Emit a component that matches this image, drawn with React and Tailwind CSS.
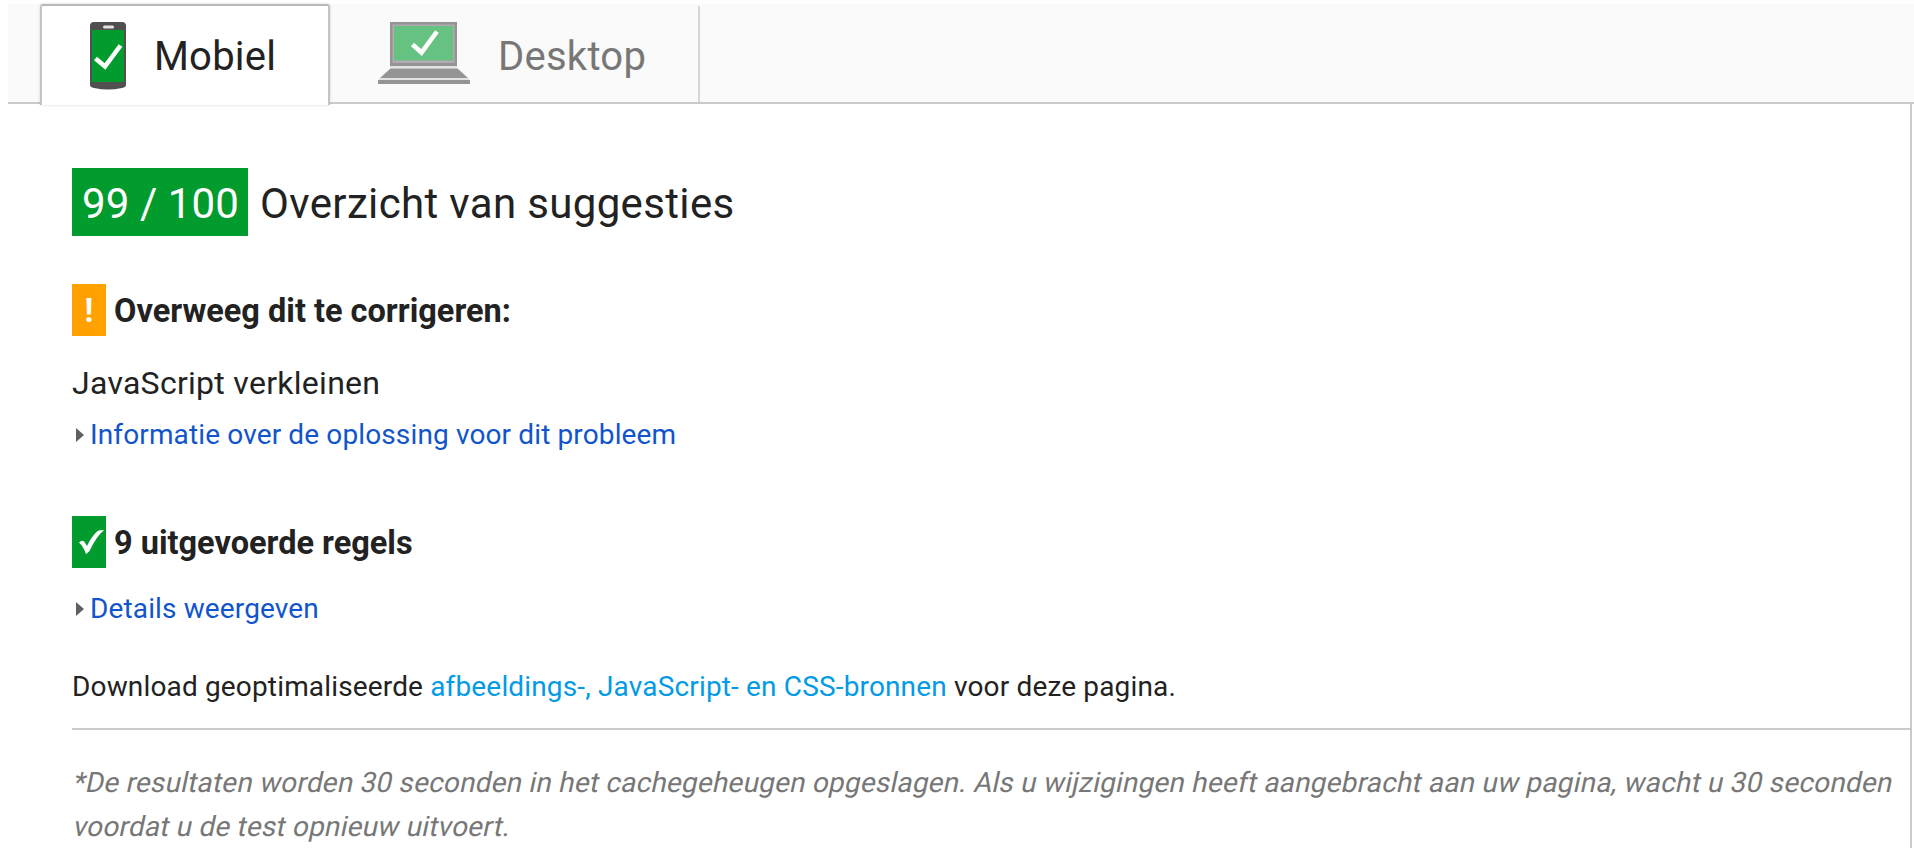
function PhoneIcon() {
  return (
    <svg className="block h-[68px] w-9 shrink-0" viewBox="0 0 36 68">
      <path d="M4 0H32Q36 0 36 4V63Q36 65 32 66Q18 69 4 66Q0 65 0 63V4Q0 0 4 0Z" fill="#505050" />
      <rect x="13" y="3.5" width="11" height="3" rx="1.5" fill="#e4e4e4" />
      <rect x="2" y="8" width="32" height="52" fill="#029b2d" />
      <path d="M5.5 36.500L15 44.500L30.500 23.500" fill="none" stroke="#fff" strokeWidth="4.600" />
    </svg>
  );
}

function LaptopIcon() {
  return (
    <svg className="block h-[62px] w-[92px] shrink-0" viewBox="0 0 92 62">
      <rect x="12" y="0" width="67" height="44" fill="#949494" />
      <rect x="14.5" y="2.5" width="62" height="38.5" fill="#b3a9b0" />
      <rect x="16" y="4" width="59" height="34.500" fill="#66c281" />
      <path d="M34.500 22.500L43.500 30.500L59 9.500" fill="none" stroke="#fff" strokeWidth="4.600" />
      <rect x="12" y="44" width="67" height="2.500" fill="#e2e2e2" />
      <path d="M12.500 46.500H79.500L90 56H2Z" fill="#949494" />
      <rect x="1" y="56" width="90" height="2" fill="#e2e2e2" />
      <rect x="0" y="58" width="92" height="4" fill="#949494" />
    </svg>
  );
}

function Toggle({ children }) {
  return (
    <a className="flex h-11 items-start text-[28px] leading-[44px] tracking-[0.13px] text-[#1155cc]">
      <svg className="ml-1 mr-[6px] mt-4 h-[14px] w-2 shrink-0" viewBox="0 0 8 14">
        <path d="M0 0L8 7L0 14Z" fill="#606060" />
      </svg>
      <span className="mt-px whitespace-nowrap">{children}</span>
    </a>
  );
}

export default function App() {
  return (
    <div className="h-[858px] w-[1914px] overflow-hidden bg-white pl-2 pt-1 font-['Roboto',sans-serif] text-[#222]">
      <div className="flex h-[100px] border-b-2 border-[#cacaca] bg-[#fafafa] pl-8">
        <div className="z-10 flex h-[101px] w-[290px] shrink-0 rounded-t-[3px] border-2 border-b-0 border-[#c4c4c4] border-t-[#b8b8b8] bg-white pl-12 pt-4 shadow-[0_0_3px_rgba(0,0,0,0.16)]">
          <PhoneIcon />
          <span className="ml-7 h-[68px] whitespace-nowrap text-[40px] leading-[70px] tracking-[0.2px]">Mobiel</span>
        </div>
        <div className="mt-[2px] flex w-[370px] shrink-0 border-r-2 border-[#d6d6d6] pl-12 pt-4 text-[#777]">
          <LaptopIcon />
          <span className="ml-7 h-[68px] whitespace-nowrap text-[40px] leading-[70px] tracking-[0.25px]">Desktop</span>
        </div>
      </div>
      <div className="h-[744px] w-[1904px] border-r-2 border-[#cacaca] pl-16 pt-16">
        <h1 className="flex h-[68px] whitespace-nowrap text-[42px] leading-[72px]">
          <span className="w-[176px] bg-[#029b2d] pl-[10px] tracking-[0.1px] text-white">99 / 100</span>
          <span className="ml-3 tracking-[0.35px]">Overzicht van suggesties</span>
        </h1>
        <h2 className="mt-12 flex h-[52px] whitespace-nowrap text-[32.5px] font-bold leading-[55px]">
          <span className="w-[34px] bg-[#ffa200] text-center text-white">!</span>
          <span className="ml-2">Overweeg dit te corrigeren:</span>
        </h2>
        <h3 className="mt-6 h-12 text-[32px] leading-[46px] tracking-[0.28px]">JavaScript verkleinen</h3>
        <div className="mt-1">
          <Toggle>Informatie over de oplossing voor dit probleem</Toggle>
        </div>
        <h2 className="mt-[60px] flex h-[52px] whitespace-nowrap text-[32.5px] font-bold leading-[55px]">
          <span className="flex w-[34px] bg-[#029b2d] pl-[6px] pt-[13px]">
            <svg className="h-[26px] w-[27px]" viewBox="0 0 27 26">
              <path d="M1 13.500Q4 10.500 6.500 13L9 17Q13.500 7.500 19 2.500Q22 .8 26 1.200Q18.500 7 11.500 22L8 25.200Q5.500 17.500 1 13.500Z" fill="#fff" />
            </svg>
          </span>
          <span className="ml-2">9 uitgevoerde regels</span>
        </h2>
        <div className="mt-[18px]">
          <Toggle>Details weergeven</Toggle>
        </div>
        <p className="mt-[34px] h-11 whitespace-nowrap text-[28px] leading-[46px] tracking-[0.155px]">
          Download geoptimaliseerde <a className="text-[#039be5]">afbeeldings-, JavaScript- en CSS-bronnen</a> voor deze pagina.
        </p>
        <div className="mt-5 border-t-2 border-[#cacaca] pt-[31px] text-[28px] leading-[44px] tracking-[0.175px] text-[#777]">
          <p className="origin-[0_32px] -skew-x-12 whitespace-nowrap">*De resultaten worden 30 seconden in het cachegeheugen opgeslagen. Als u wijzigingen heeft aangebracht aan uw pagina, wacht u 30 seconden</p>
          <p className="origin-[0_32px] -skew-x-12 whitespace-nowrap">voordat u de test opnieuw uitvoert.</p>
        </div>
      </div>
    </div>
  );
}
